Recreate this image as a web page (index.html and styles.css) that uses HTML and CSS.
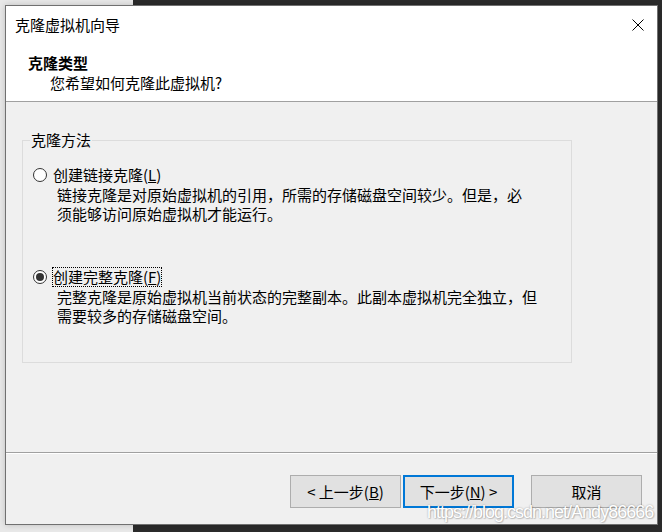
FILE: index.html
```html
<!DOCTYPE html>
<html lang="zh-CN">
<head>
<meta charset="utf-8">
<title>克隆虚拟机向导</title>
<link rel="stylesheet" href="styles.css">
</head>
<body>
<div class="dialog">
  <div class="titlebar">
    <span class="title">克隆虚拟机向导</span>
    <svg class="close" width="12" height="12" viewBox="0 0 12 12" aria-hidden="true">
      <path d="M0.5 0.5 L11.5 11.5 M11.5 0.5 L0.5 11.5" stroke="#000" stroke-width="1" fill="none"/>
    </svg>
  </div>
  <div class="header">
    <div class="h-title">克隆类型</div>
    <div class="h-sub">您希望如何克隆此虚拟机?</div>
  </div>
  <div class="content">
    <fieldset class="group">
      <legend>克隆方法</legend>
      <div class="option first">
        <span class="radio"></span>
        <span class="label">创建链接克隆(<u>L</u>)</span>
      </div>
      <div class="desc">
        <div>链接克隆是对原始虚拟机的引用，所需的存储磁盘空间较少。但是，必</div>
        <div>须能够访问原始虚拟机才能运行。</div>
      </div>
      <div class="option second">
        <span class="radio checked"></span>
        <span class="label focus">创建完整克隆(<u>F</u>)</span>
      </div>
      <div class="desc">
        <div>完整克隆是原始虚拟机当前状态的完整副本。此副本虚拟机完全独立，但</div>
        <div>需要较多的存储磁盘空间。</div>
      </div>
    </fieldset>
  </div>
  <div class="footer">
    <button class="btn back">&lt; 上一步(<u>B</u>)</button>
    <button class="btn next default">下一步(<u>N</u>) &gt;</button>
    <button class="btn cancel">取消</button>
  </div>
  <div class="watermark">https://blog.csdn.net/Andy86666</div>
</div>
</body>
</html>
```
FILE: styles.css
```css
html, body {
  margin: 0;
  padding: 0;
}
body {
  width: 662px;
  height: 532px;
  overflow: hidden;
  background: linear-gradient(to right, #e8e8e8 133px, #2b2b2b 133px);
  font-family: "Noto Sans CJK SC", "Noto Sans", sans-serif;
  font-size: 15px;
  color: #000;
}
.dialog {
  position: relative;
  box-sizing: border-box;
  margin: 5px 0 0 5px;
  width: 653px;
  height: 520px;
  border: 1px solid #707070;
  background: #f0f0f0;
  display: flex;
  flex-direction: column;
  box-shadow: 0 0 6px rgba(0, 0, 0, 0.18);
}
.titlebar {
  height: 38px;
  flex: none;
  background: #fff;
  display: flex;
  align-items: center;
  justify-content: space-between;
  padding: 0 13px 0 9px;
  line-height: 20px;
}
.close {
  display: block;
}
.header {
  flex: none;
  background: #fff;
  border-bottom: 1px solid #a0a0a0;
  padding-top: 9px;
  box-sizing: content-box;
  height: 48px;
  line-height: 20px;
}
.h-title {
  font-weight: bold;
  padding-left: 22px;
}
.h-sub {
  padding-left: 44px;
}
.content {
  height: 350px;
  flex: none;
  box-sizing: border-box;
  padding-top: 28px;
  padding-left: 16px;
}
.group {
  box-sizing: border-box;
  width: 550px;
  margin: 0;
  padding: 15px 0 37px 0;
  border: 1px solid #dcdcdc;
  min-width: 0;
}
.group legend {
  margin-left: 7px;
  padding: 0 1px;
  line-height: 20px;
}
.option {
  display: flex;
  align-items: center;
  margin-left: 10px;
  height: 20px;
}
.option.second {
  margin-top: 44px;
}
.radio {
  box-sizing: border-box;
  width: 14px;
  height: 14px;
  min-width: 14px;
  border: 1px solid #333;
  border-radius: 50%;
  background: #fff;
  margin-right: 5px;
  display: flex;
  align-items: center;
  justify-content: center;
  flex: none;
}
.radio.checked::after {
  content: "";
  width: 8px;
  height: 8px;
  border-radius: 50%;
  background: #333;
}
.label {
  border: 1px dotted transparent;
  line-height: 18px;
  white-space: nowrap;
}
.label.focus {
  border-color: #000;
}
.desc {
  margin-left: 34px;
  line-height: 19px;
  white-space: nowrap;
}
.footer {
  flex: 1;
  border-top: 1px solid #a0a0a0;
  box-shadow: inset 0 1px 0 #fff;
  display: flex;
  justify-content: flex-end;
  align-items: flex-start;
  padding: 22px 15px 0 0;
}
.btn {
  box-sizing: border-box;
  width: 111px;
  height: 33px;
  background: #e1e1e1;
  border: 1px solid #adadad;
  border-radius: 0;
  font-family: "Noto Sans CJK SC", "Noto Sans", sans-serif;
  font-size: 15px;
  color: #000;
  padding: 0;
  line-height: 20px;
}
.btn.back {
  margin-right: 2px;
}
.btn.next {
  margin-right: 17px;
}
.btn.default {
  border: 2px solid #0078d7;
}
.watermark {
  position: absolute;
  left: 421px;
  top: 496px;
  font-family: "Liberation Sans", Arial, sans-serif;
  font-size: 18px;
  letter-spacing: -1px;
  line-height: 20px;
  color: #ffffff;
  text-shadow: 0 0 2px rgba(0, 0, 0, 0.35), 1px 1px 1px rgba(0, 0, 0, 0.15);
  white-space: nowrap;
}
```
